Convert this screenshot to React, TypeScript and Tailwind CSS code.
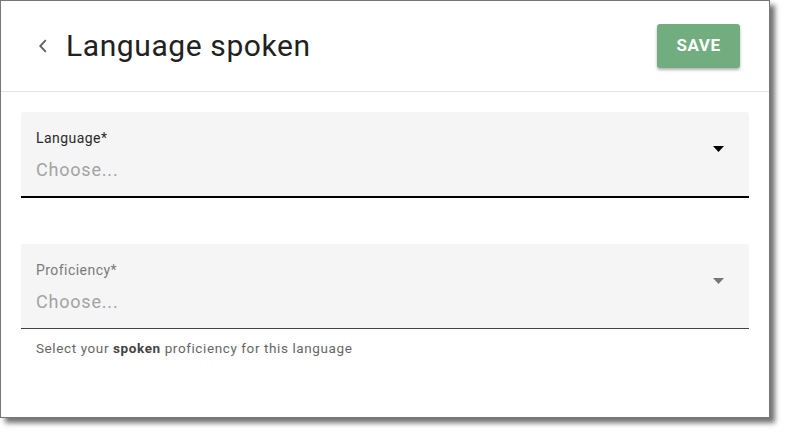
import React from "react";

function Caret({ className }: { className: string }) {
  return (
    <svg width="11" height="6" viewBox="0 0 11 6" className={className}>
      <path d="M0 0 L11 0 L5.5 6 Z" fill="currentColor" />
    </svg>
  );
}

function SelectField({
  label,
  focused,
}: {
  label: string;
  focused?: boolean;
}) {
  return (
    <div
      className={
        focused
          ? "flex items-start justify-between bg-[#f5f5f5] border-b-2 border-black rounded-t-[3px]"
          : "flex items-start justify-between bg-[#f5f5f5] border-b border-[#444444] rounded-t-[3px]"
      }
    >
      <div className="flex flex-col pl-[15px] pt-[18px] h-[84px]">
        <span
          className={
            focused
              ? "text-[14px] leading-[16px] tracking-[0.45px] text-[#2a2a2a]"
              : "text-[14px] leading-[16px] tracking-[0.45px] text-[#7a7a7a]"
          }
        >
          {label}
        </span>
        <span className="mt-[12px] text-[18px] leading-[24px] tracking-[0.8px] text-[#a3a3a3]">
          Choose...
        </span>
      </div>
      <div className="pt-[34px] pr-[25px]">
        <Caret className={focused ? "text-black" : "text-[#777777]"} />
      </div>
    </div>
  );
}

export default function App() {
  return (
    <div className="w-[785px] h-[433px] bg-white font-['Roboto',sans-serif]">
      <div className="w-[770px] h-[418px] bg-white border border-[#777777] shadow-[5px_5px_5px_rgba(0,0,0,0.55)]">
        <div className="flex items-center justify-between h-[91px] border-b border-[#e2e2e2] pl-[38px] pr-[29px]">
          <div className="flex items-center">
            <svg width="8" height="14" viewBox="0 0 8 14" className="text-[#5f5f66]">
              <path
                d="M6.8 1.2 L1.2 7 L6.8 12.8"
                fill="none"
                stroke="currentColor"
                strokeWidth="1.8"
              />
            </svg>
            <h1 className="ml-[19px] text-[30px] leading-[36px] tracking-[0.6px] text-[#212121]">
              Language spoken
            </h1>
          </div>
          <button className="w-[83px] h-[44px] rounded-[3px] bg-[#72ad80] text-white text-[17px] font-bold tracking-[0.5px] shadow-[0_2px_3px_rgba(0,0,0,0.3)]">
            SAVE
          </button>
        </div>
        <div className="px-5 pt-5">
          <SelectField label="Language*" focused />
          <div className="mt-[46px]">
            <SelectField label="Proficiency*" />
          </div>
          <p className="pl-[15px] mt-[11px] text-[13.5px] leading-[16px] tracking-[0.6px] text-[#666666]">
            Select your <span className="font-bold text-[#444444]">spoken</span> proficiency for this language
          </p>
        </div>
      </div>
    </div>
  );
}
